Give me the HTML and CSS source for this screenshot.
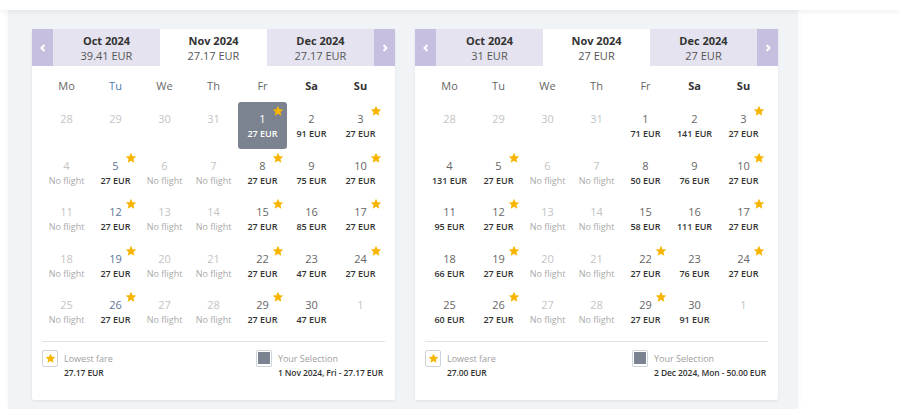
FILE: index.html
```html
<!DOCTYPE html>
<html>
<head>
<meta charset="utf-8">
<link rel="stylesheet" href="styles.css">
</head>
<body>
<svg width="0" height="0" class="defs"><defs><symbol id="star" viewBox="0 0 24 24"><polygon points="12,1.5 15.2,8.3 22.5,9.1 17,14.1 18.6,21.5 12,17.7 5.4,21.5 7,14.1 1.5,9.1 8.8,8.3" fill="#f7b500"/></symbol><symbol id="prev" viewBox="0 0 10 10"><polyline points="6.5,2 3.5,5 6.5,8" fill="none" stroke="#fff" stroke-width="2"/></symbol><symbol id="next" viewBox="0 0 10 10"><polyline points="3.5,2 6.5,5 3.5,8" fill="none" stroke="#fff" stroke-width="2"/></symbol></defs></svg>
<div class="topbar"></div>
<div class="stage">
  <div class="panel">
    <div class="tabs">
      <div class="arrow"><svg><use href="#prev"/></svg></div>
      <div class="tab"><b>Oct 2024</b><span>39.41 EUR</span></div>
      <div class="tab active"><b>Nov 2024</b><span>27.17 EUR</span></div>
      <div class="tab"><b>Dec 2024</b><span>27.17 EUR</span></div>
      <div class="arrow"><svg><use href="#next"/></svg></div>
    </div>
    <div class="body">
      <div class="grid">
        <div class="dow">Mo</div><div class="dow tu">Tu</div><div class="dow">We</div><div class="dow">Th</div><div class="dow">Fr</div><div class="dow we">Sa</div><div class="dow we">Su</div>

        <div class="cell off"><span class="num">28</span></div>
        <div class="cell off"><span class="num">29</span></div>
        <div class="cell off"><span class="num">30</span></div>
        <div class="cell off"><span class="num">31</span></div>
        <div class="cell sel"><span class="num">1</span><span class="price">27 EUR</span><svg class="star"><use href="#star"/></svg></div>
        <div class="cell"><span class="num">2</span><span class="price">91 EUR</span></div>
        <div class="cell"><span class="num">3</span><span class="price">27 EUR</span><svg class="star"><use href="#star"/></svg></div>

        <div class="cell nf"><span class="num">4</span><span class="price">No flight</span></div>
        <div class="cell tu"><span class="num">5</span><span class="price">27 EUR</span><svg class="star"><use href="#star"/></svg></div>
        <div class="cell nf"><span class="num">6</span><span class="price">No flight</span></div>
        <div class="cell nf"><span class="num">7</span><span class="price">No flight</span></div>
        <div class="cell"><span class="num">8</span><span class="price">27 EUR</span><svg class="star"><use href="#star"/></svg></div>
        <div class="cell"><span class="num">9</span><span class="price">75 EUR</span></div>
        <div class="cell"><span class="num">10</span><span class="price">27 EUR</span><svg class="star"><use href="#star"/></svg></div>

        <div class="cell nf"><span class="num">11</span><span class="price">No flight</span></div>
        <div class="cell tu"><span class="num">12</span><span class="price">27 EUR</span><svg class="star"><use href="#star"/></svg></div>
        <div class="cell nf"><span class="num">13</span><span class="price">No flight</span></div>
        <div class="cell nf"><span class="num">14</span><span class="price">No flight</span></div>
        <div class="cell"><span class="num">15</span><span class="price">27 EUR</span><svg class="star"><use href="#star"/></svg></div>
        <div class="cell"><span class="num">16</span><span class="price">85 EUR</span></div>
        <div class="cell"><span class="num">17</span><span class="price">27 EUR</span><svg class="star"><use href="#star"/></svg></div>

        <div class="cell nf"><span class="num">18</span><span class="price">No flight</span></div>
        <div class="cell tu"><span class="num">19</span><span class="price">27 EUR</span><svg class="star"><use href="#star"/></svg></div>
        <div class="cell nf"><span class="num">20</span><span class="price">No flight</span></div>
        <div class="cell nf"><span class="num">21</span><span class="price">No flight</span></div>
        <div class="cell"><span class="num">22</span><span class="price">27 EUR</span><svg class="star"><use href="#star"/></svg></div>
        <div class="cell"><span class="num">23</span><span class="price">47 EUR</span></div>
        <div class="cell"><span class="num">24</span><span class="price">27 EUR</span><svg class="star"><use href="#star"/></svg></div>

        <div class="cell nf"><span class="num">25</span><span class="price">No flight</span></div>
        <div class="cell tu"><span class="num">26</span><span class="price">27 EUR</span><svg class="star"><use href="#star"/></svg></div>
        <div class="cell nf"><span class="num">27</span><span class="price">No flight</span></div>
        <div class="cell nf"><span class="num">28</span><span class="price">No flight</span></div>
        <div class="cell"><span class="num">29</span><span class="price">27 EUR</span><svg class="star"><use href="#star"/></svg></div>
        <div class="cell"><span class="num">30</span><span class="price">47 EUR</span></div>
        <div class="cell off"><span class="num">1</span></div>
      </div>
      <div class="legend">
        <div class="leg">
          <div class="box"><svg class="lstar"><use href="#star"/></svg></div>
          <div class="ltext"><span class="lab">Lowest fare</span><span class="val">27.17 EUR</span></div>
        </div>
        <div class="leg">
          <div class="box"><i class="swatch"></i></div>
          <div class="ltext"><span class="lab">Your Selection</span><span class="val">1 Nov 2024, Fri - 27.17 EUR</span></div>
        </div>
      </div>
    </div>
  </div>

  <div class="panel">
    <div class="tabs">
      <div class="arrow"><svg><use href="#prev"/></svg></div>
      <div class="tab"><b>Oct 2024</b><span>31 EUR</span></div>
      <div class="tab active"><b>Nov 2024</b><span>27 EUR</span></div>
      <div class="tab"><b>Dec 2024</b><span>27 EUR</span></div>
      <div class="arrow"><svg><use href="#next"/></svg></div>
    </div>
    <div class="body">
      <div class="grid">
        <div class="dow">Mo</div><div class="dow">Tu</div><div class="dow">We</div><div class="dow">Th</div><div class="dow">Fr</div><div class="dow we">Sa</div><div class="dow we">Su</div>

        <div class="cell off"><span class="num">28</span></div>
        <div class="cell off"><span class="num">29</span></div>
        <div class="cell off"><span class="num">30</span></div>
        <div class="cell off"><span class="num">31</span></div>
        <div class="cell"><span class="num">1</span><span class="price">71 EUR</span></div>
        <div class="cell"><span class="num">2</span><span class="price">141 EUR</span></div>
        <div class="cell"><span class="num">3</span><span class="price">27 EUR</span><svg class="star"><use href="#star"/></svg></div>

        <div class="cell"><span class="num">4</span><span class="price">131 EUR</span></div>
        <div class="cell"><span class="num">5</span><span class="price">27 EUR</span><svg class="star"><use href="#star"/></svg></div>
        <div class="cell nf"><span class="num">6</span><span class="price">No flight</span></div>
        <div class="cell nf"><span class="num">7</span><span class="price">No flight</span></div>
        <div class="cell"><span class="num">8</span><span class="price">50 EUR</span></div>
        <div class="cell"><span class="num">9</span><span class="price">76 EUR</span></div>
        <div class="cell"><span class="num">10</span><span class="price">27 EUR</span><svg class="star"><use href="#star"/></svg></div>

        <div class="cell"><span class="num">11</span><span class="price">95 EUR</span></div>
        <div class="cell"><span class="num">12</span><span class="price">27 EUR</span><svg class="star"><use href="#star"/></svg></div>
        <div class="cell nf"><span class="num">13</span><span class="price">No flight</span></div>
        <div class="cell nf"><span class="num">14</span><span class="price">No flight</span></div>
        <div class="cell"><span class="num">15</span><span class="price">58 EUR</span></div>
        <div class="cell"><span class="num">16</span><span class="price">111 EUR</span></div>
        <div class="cell"><span class="num">17</span><span class="price">27 EUR</span><svg class="star"><use href="#star"/></svg></div>

        <div class="cell"><span class="num">18</span><span class="price">66 EUR</span></div>
        <div class="cell"><span class="num">19</span><span class="price">27 EUR</span><svg class="star"><use href="#star"/></svg></div>
        <div class="cell nf"><span class="num">20</span><span class="price">No flight</span></div>
        <div class="cell nf"><span class="num">21</span><span class="price">No flight</span></div>
        <div class="cell"><span class="num">22</span><span class="price">27 EUR</span><svg class="star"><use href="#star"/></svg></div>
        <div class="cell"><span class="num">23</span><span class="price">76 EUR</span></div>
        <div class="cell"><span class="num">24</span><span class="price">27 EUR</span><svg class="star"><use href="#star"/></svg></div>

        <div class="cell"><span class="num">25</span><span class="price">60 EUR</span></div>
        <div class="cell"><span class="num">26</span><span class="price">27 EUR</span><svg class="star"><use href="#star"/></svg></div>
        <div class="cell nf"><span class="num">27</span><span class="price">No flight</span></div>
        <div class="cell nf"><span class="num">28</span><span class="price">No flight</span></div>
        <div class="cell"><span class="num">29</span><span class="price">27 EUR</span><svg class="star"><use href="#star"/></svg></div>
        <div class="cell"><span class="num">30</span><span class="price">91 EUR</span></div>
        <div class="cell off"><span class="num">1</span></div>
      </div>
      <div class="legend">
        <div class="leg">
          <div class="box"><svg class="lstar"><use href="#star"/></svg></div>
          <div class="ltext"><span class="lab">Lowest fare</span><span class="val">27.00 EUR</span></div>
        </div>
        <div class="leg">
          <div class="box"><i class="swatch"></i></div>
          <div class="ltext"><span class="lab">Your Selection</span><span class="val">2 Dec 2024, Mon - 50.00 EUR</span></div>
        </div>
      </div>
    </div>
  </div>
</div>
</body>
</html>
```
FILE: styles.css
```css
* { box-sizing: border-box; }
html, body { margin: 0; padding: 0; }
body {
  background: #fff;
  font-family: "Open Sans", "Noto Sans", sans-serif;
  color: #333;
  height: 409px;
  overflow: hidden;
  position: relative;
}
.defs { position: absolute; }
.topbar {
  height: 10px;
  background: #fff;
  box-shadow: 0 2px 5px rgba(0, 0, 0, 0.06);
  position: relative;
  z-index: 2;
}
.stage {
  margin-left: 8px;
  width: 790px;
  height: 399px;
  background: #f1f4f7;
  box-shadow: 0 0 6px rgba(0, 0, 0, 0.04);
  display: flex;
  gap: 20px;
  padding: 19px 0 0 24px;
}
.panel {
  width: 363px;
  height: 371px;
  background: #fff;
  border-radius: 2px;
  box-shadow: 0 1px 3px rgba(0, 0, 0, 0.08);
  display: flex;
  flex-direction: column;
}
.tabs {
  display: flex;
  height: 37px;
}
.arrow {
  width: 21px;
  background: #c6bfe0;
  display: flex;
  align-items: center;
  justify-content: center;
}
.arrow svg { width: 10px; height: 10px; }
.tab {
  flex: 1;
  background: #e4e3ef;
  display: flex;
  flex-direction: column;
  align-items: center;
  justify-content: center;
  font-size: 11px;
  line-height: 15px;
  color: #555;
}
.tab b { color: #333; font-weight: 700; }
.tab.active { background: #fff; }
.body {
  padding: 10px 10px 0;
  flex: 1;
  display: flex;
  flex-direction: column;
}
.grid {
  display: grid;
  grid-template-columns: repeat(7, 1fr);
  grid-template-rows: 26px repeat(5, 46.5px);
}
.dow {
  font-size: 11px;
  line-height: 20px;
  height: 20px;
  text-align: center;
  color: #666;
}
.dow.tu { color: #4c7cb3; }
.dow.we { color: #333; font-weight: 700; }
.cell {
  position: relative;
  display: flex;
  flex-direction: column;
  align-items: center;
  padding-top: 9px;
  border-radius: 3px;
}
.num {
  font-size: 11px;
  line-height: 15px;
  color: #666;
}
.price {
  font-size: 9px;
  line-height: 15px;
  font-weight: 600;
  color: #333;
}
.cell.tu .num { color: #5d7597; }
.cell.nf .num, .cell.off .num { color: #c4c4c4; }
.cell.nf .price { color: #a9a9a9; font-weight: 400; }
.cell.sel { background: #7b8391; }
.cell.sel .num, .cell.sel .price { color: #fff; }
.star {
  position: absolute;
  width: 12px;
  height: 12px;
  top: 3px;
  right: 3px;
}
.legend {
  margin-top: 6px;
  border-top: 1px solid #dfe1e5;
  padding: 8px 2px 0 0;
  display: flex;
  justify-content: space-between;
}
.leg { display: flex; gap: 6px; }
.box {
  width: 16px;
  height: 17px;
  border: 1px solid #cfd3d9;
  border-radius: 2px;
  display: flex;
  align-items: center;
  justify-content: center;
  background: #fff;
}
.lstar { width: 11px; height: 11px; }
.swatch {
  display: block;
  width: 12px;
  height: 12px;
  background: #7b8391;
}
.ltext {
  display: flex;
  flex-direction: column;
  font-size: 9px;
  line-height: 14px;
  padding-top: 2px;
}
.lab { color: #a0a0a0; }
.val { color: #333; font-weight: 600; font-size: 8.5px; letter-spacing: -0.1px; }
```
